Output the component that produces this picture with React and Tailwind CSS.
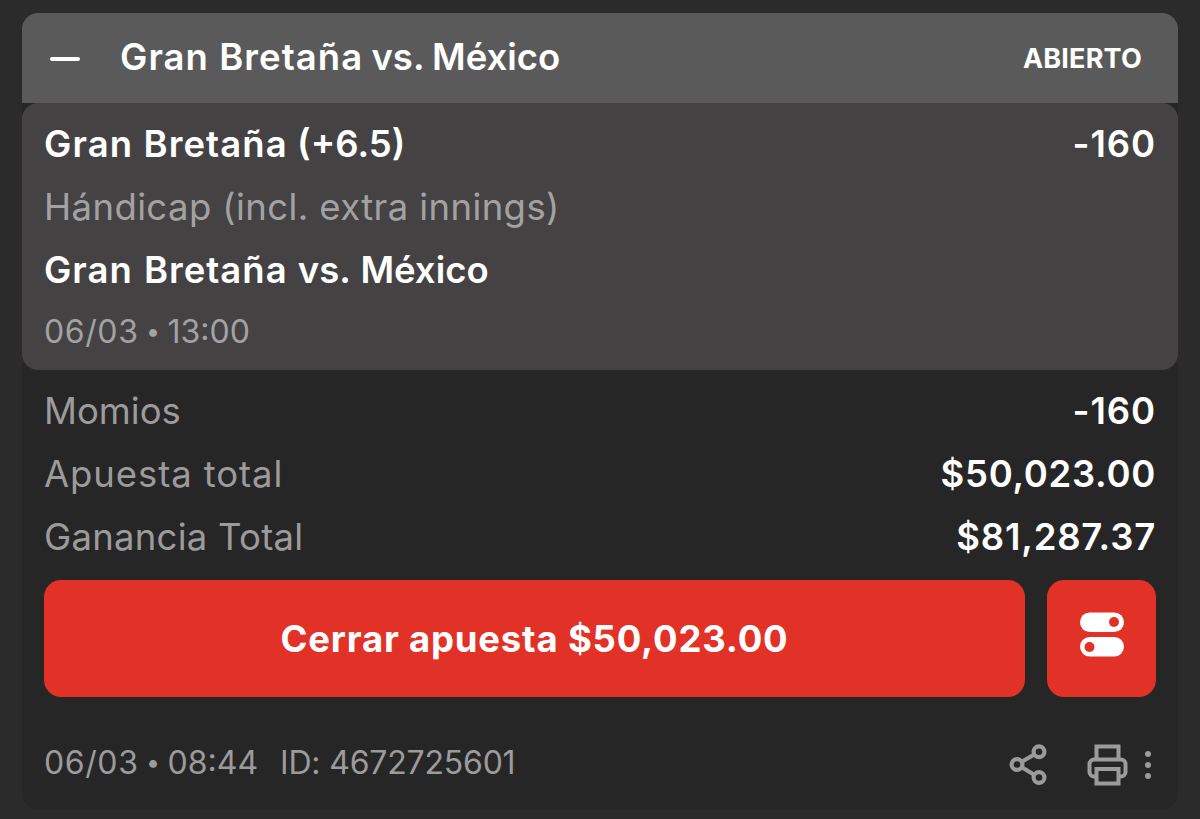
import React from 'react';

const totals = [
  { label: 'Momios', value: '-160', labelClass: 'tracking-normal', valueClass: 'tracking-[0.9px]' },
  { label: 'Apuesta total', value: '$50,023.00', labelClass: 'tracking-[0.9px]', valueClass: 'tracking-[0.7px]' },
  { label: 'Ganancia Total', value: '$81,287.37', labelClass: 'tracking-[0.25px]', valueClass: 'tracking-[0.8px]' }
];

function TogglesIcon() {
  return (
    <svg width="44" height="45" viewBox="0 0 44 45" fill="none">
      <rect x="0" y="0.5" width="44" height="19.5" rx="9.75" fill="#fff" />
      <circle cx="34" cy="10" r="5" fill="#e23127" />
      <rect x="0" y="25" width="44" height="19.5" rx="9.75" fill="#fff" />
      <circle cx="9.5" cy="35" r="5" fill="#e23127" />
    </svg>
  );
}

function ShareIcon() {
  return (
    <svg width="38" height="42" viewBox="0 0 38 42" fill="none" stroke="#9c9b9c" strokeWidth="4.2">
      <circle cx="8" cy="20.5" r="5.4" />
      <circle cx="30" cy="7.7" r="5.4" />
      <circle cx="30" cy="33.5" r="5.4" />
      <path d="M12.8 17.7 25.2 10.5M12.8 23.3 25.2 30.7" />
    </svg>
  );
}

function PrintIcon() {
  return (
    <svg width="42" height="42" viewBox="0 0 42 42" fill="none" stroke="#9c9b9c" strokeWidth="4">
      <path d="M9.5 16V2.5H31.5V16" />
      <path d="M9.5 32.5H7a4.5 4.5 0 0 1-4.5-4.5V20a4.5 4.5 0 0 1 4.5-4.5H34a4.5 4.5 0 0 1 4.5 4.5V28a4.5 4.5 0 0 1-4.5 4.5H31.5" />
      <path d="M9.5 25H31.5V39.5H9.5Z" />
    </svg>
  );
}

function DateTime({ date, time }) {
  return (
    <span className="flex items-center">
      <span className="tracking-[0.6px]">{date}</span>
      <span className="w-[29px] pb-px text-center text-[25px]">•</span>
      <span>{time}</span>
    </span>
  );
}

function App() {
  return (
    <div className="h-[819px] w-[1200px] overflow-hidden bg-[#2b2b2b] px-[22px] pt-[13px] font-['Inter','Liberation_Sans',sans-serif] text-[36.5px] leading-none whitespace-nowrap text-white">
      <div className="flex h-[796px] flex-col overflow-hidden rounded-[16px] bg-[#262626]">
        {/* Header */}
        <header className="flex h-[90px] shrink-0 items-center justify-between bg-[#5a5a5a] pr-[36px] pl-[28px]">
          <div className="flex items-center">
            <span className="mt-[2px] h-1 w-[30px] rounded-sm bg-white"></span>
            <h1 className="ml-[40px] pb-[2px] font-semibold">
              <span className="tracking-[1.05px]">Gran Bretaña</span>
              <span className="[word-spacing:-1px]"> vs. México</span>
            </h1>
          </div>
          <span className="text-[27px] font-bold tracking-[0.2px]">ABIERTO</span>
        </header>

        {/* Selection */}
        <section className="h-[267px] shrink-0 rounded-[16px] bg-[#444243] px-[22px] pt-[10px]">
          <div className="flex h-[63px] items-center justify-between font-semibold">
            <span>
              <span className="tracking-[1.1px]">Gran Bretaña</span> (+6.5)
            </span>
            <span className="tracking-[0.9px]">-160</span>
          </div>
          <div className="flex h-[63px] items-center text-[#a3a2a3]">
            <span className="tracking-[0.4px]">Hándicap (incl. extra innings)</span>
          </div>
          <div className="flex h-[63px] items-center font-semibold">
            <span className="[word-spacing:1px]">
              <span className="tracking-[1px]">Gran Bretaña</span> vs. México
            </span>
          </div>
          <div className="flex h-[60px] items-center text-[32px] text-[#a3a2a3]">
            <DateTime date="06/03" time="13:00" />
          </div>
        </section>

        {/* Totals */}
        <section className="px-[22px] pt-[10px]">
          {totals.map(row => (
            <div key={row.label} className="flex h-[63px] items-center justify-between">
              <span className={`text-[#9c9b9c] ${row.labelClass}`}>{row.label}</span>
              <span className={`font-semibold ${row.valueClass}`}>{row.value}</span>
            </div>
          ))}
        </section>

        {/* Cash out */}
        <div className="mt-[11px] flex h-[117px] shrink-0 gap-[22px] px-[22px]">
          <button className="flex w-[981px] items-center justify-center rounded-[17px] bg-[#e23127] pt-[2px] font-bold">
            <span className="tracking-[0.8px]">Cerrar apuesta $50,023.00</span>
          </button>
          <button className="flex w-[109px] items-center justify-center rounded-[17px] bg-[#e23127] pb-2">
            <TogglesIcon />
          </button>
        </div>

        {/* Footer */}
        <footer className="mt-[22px] flex h-[90px] items-center justify-between pr-[27px] pl-[22px] text-[32px] text-[#9c9b9c]">
          <div className="flex items-center pb-[2px]">
            <DateTime date="06/03" time="08:44" />
            <span className="ml-[22px] tracking-[-0.2px]">ID: 4672725601</span>
          </div>
          <div className="flex items-center pt-[2px]">
            <ShareIcon />
            <span className="ml-[40px]"><PrintIcon /></span>
            <span className="ml-[16px] flex flex-col gap-[5px]">
              <i className="size-[6px] rounded-full bg-[#9c9b9c]"></i>
              <i className="size-[6px] rounded-full bg-[#9c9b9c]"></i>
              <i className="size-[6px] rounded-full bg-[#9c9b9c]"></i>
            </span>
          </div>
        </footer>
      </div>
    </div>
  );
}

export default App;
